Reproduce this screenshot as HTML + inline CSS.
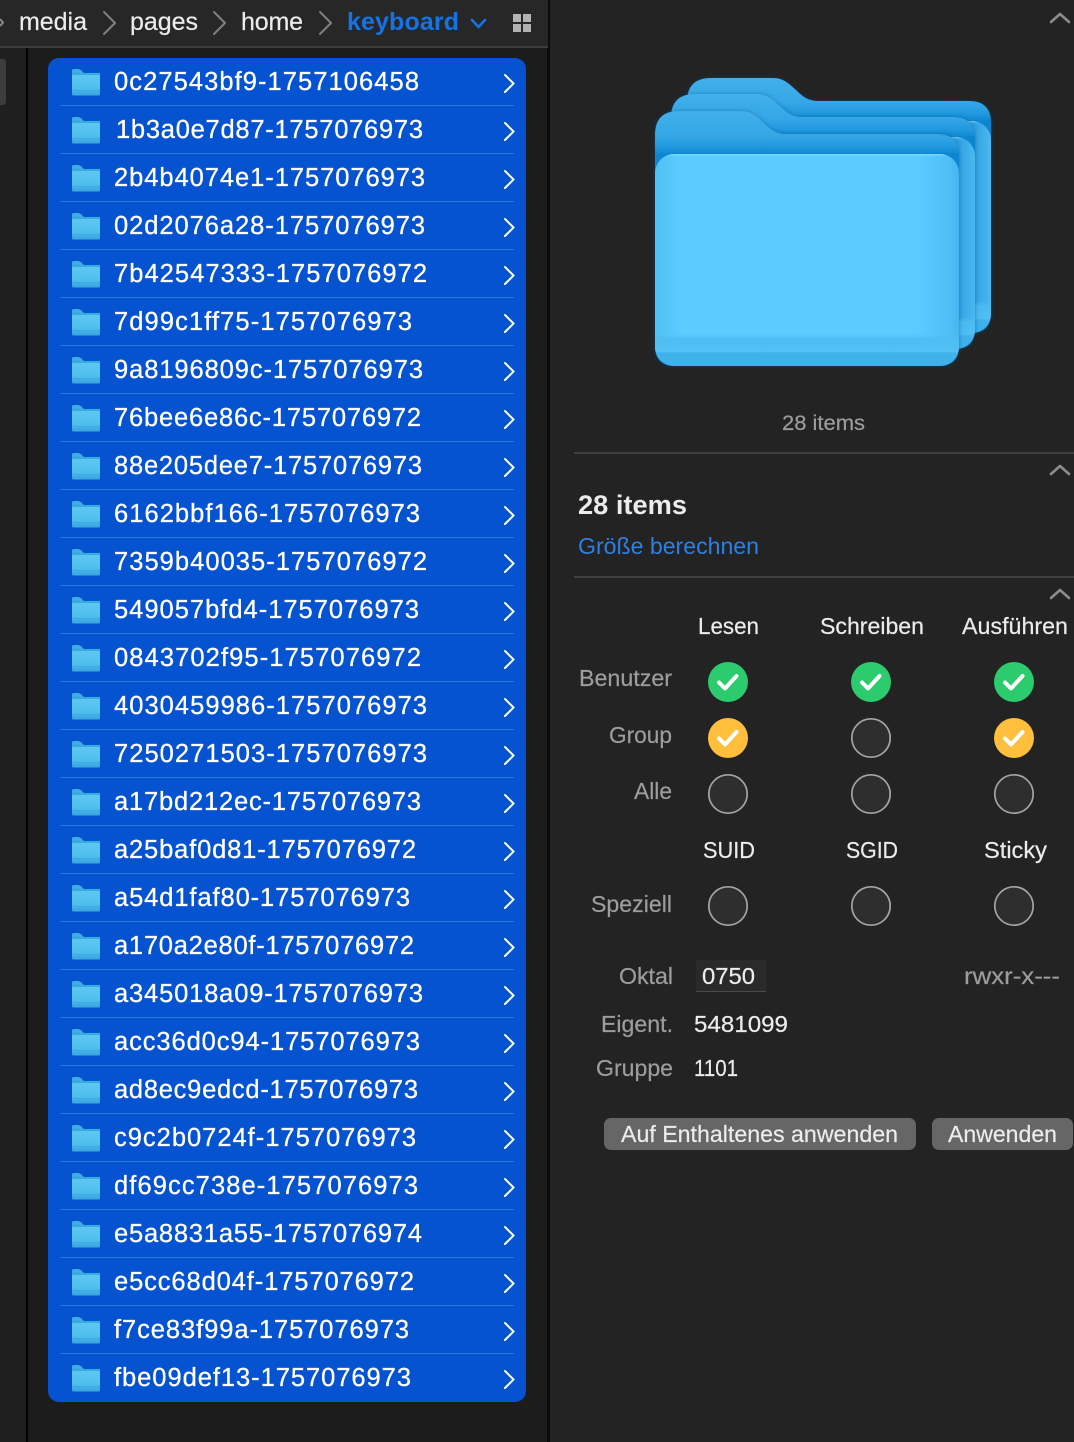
<!DOCTYPE html>
<html>
<head>
<meta charset="utf-8">
<style>
html,body{margin:0;padding:0;background:#232323;width:1074px;height:1442px;overflow:hidden}
svg{display:block}
text{font-family:"Liberation Sans",sans-serif;font-size:25px}
.f{fill:#fff;font-size:25.5px;stroke:#fff;stroke-width:.3px}
.g{fill:#9d9d9d;font-size:23.5px;stroke:#9d9d9d;stroke-width:.2px}
.w{fill:#ececec;font-size:23.5px;stroke:#ececec;stroke-width:.2px}
</style>
</head>
<body>
<svg width="1074" height="1442" viewBox="0 0 1074 1442" xmlns="http://www.w3.org/2000/svg">
<defs>
<linearGradient id="back" x1="0" y1="0" x2="0" y2="1"><stop offset="0" stop-color="#41afea"/><stop offset=".09" stop-color="#36a8e7"/><stop offset=".14" stop-color="#2299df"/><stop offset=".17" stop-color="#0c86cf"/><stop offset="1" stop-color="#0c86cf"/></linearGradient>
<linearGradient id="edgeH" x1="0" y1="0" x2="1" y2="0"><stop offset="0" stop-color="#4fc0f5"/><stop offset=".08" stop-color="#5ccbff"/><stop offset=".86" stop-color="#5ccbff"/><stop offset=".97" stop-color="#4fbff5"/><stop offset="1" stop-color="#45b6ee"/></linearGradient>
<linearGradient id="strip" x1="0" y1="0" x2="1" y2="0"><stop offset=".94" stop-color="#2f9fe0"/><stop offset="1" stop-color="#4ab9f0"/></linearGradient>
<linearGradient id="band" x1="0" y1="0" x2="0" y2="1"><stop offset="0" stop-color="#7fd8ff"/><stop offset=".012" stop-color="#7fd8ff" stop-opacity="0"/><stop offset=".85" stop-color="#4fbdf2" stop-opacity="0"/><stop offset=".873" stop-color="#4fbdf2"/><stop offset=".934" stop-color="#52c1f5"/><stop offset=".937" stop-color="#42b3ec"/><stop offset="1" stop-color="#3eafe9"/></linearGradient>
<linearGradient id="smallBody" x1="0" y1="0" x2="0" y2="1"><stop offset="0" stop-color="#5cc8f3"/><stop offset=".7" stop-color="#4fbeec"/><stop offset=".72" stop-color="#43b2e6"/><stop offset="1" stop-color="#3aa6de"/></linearGradient>
<linearGradient id="smallBack" x1="0" y1="0" x2="0" y2="1"><stop offset="0" stop-color="#3eb0e2"/><stop offset="1" stop-color="#2a94d2"/></linearGradient>
<filter id="sh" x="-10%" y="-10%" width="120%" height="120%"><feDropShadow dx="0" dy="0" stdDeviation="2" flood-color="#06507f" flood-opacity=".5"/></filter>
<path id="bpath" d="M655 346V135Q655 111 679 111H741C752 111 757 117 764 123C770 129 776 134 786 134H937Q959 134 959 156V346Q959 366 939 366H675Q655 366 655 346Z" fill="url(#back)"/>
<g id="bigf" filter="url(#sh)">
<use href="#bpath"/>
<rect x="655" y="154" width="304" height="212" rx="19" fill="url(#edgeH)"/>
<rect x="655" y="154" width="304" height="212" rx="19" fill="url(#band)"/>
</g>
<g id="bigb" filter="url(#sh)">
<use href="#bpath"/>
<rect x="655" y="154" width="304" height="212" rx="19" fill="url(#strip)"/>
<rect x="655" y="154" width="304" height="212" rx="19" fill="url(#band)" opacity=".8"/>
</g>
<g id="sf">
<path d="M72 94V71Q72 69 74 69H78Q80 69 82 71Q83 73 85 73H100V93Q100 95 98 95H74Q72 95 72 94Z" fill="url(#smallBack)"/>
<rect x="72" y="75" width="28" height="20.500" rx="1.200" fill="url(#smallBody)"/>
</g>
<path id="rc" d="M505 75L513.500 83.500L505 92" fill="none" stroke="#fff" stroke-width="2" stroke-linecap="round" stroke-linejoin="round"/>
<g id="row"><use href="#sf"/><use href="#rc"/></g>
<path id="upc" d="M1051 22L1060 14L1069 22" fill="none" stroke="#8c8c8c" stroke-width="2.600" stroke-linecap="round" stroke-linejoin="round"/>
<path id="bc" d="M104 12L115 23L104 34" fill="none" stroke="#808080" stroke-width="2" stroke-linecap="round" stroke-linejoin="round"/>
<path id="ck" d="M-9 0.500L-3 6.500L8.500 -6" fill="none" stroke="#fff" stroke-width="4" stroke-linecap="round" stroke-linejoin="round"/>
<circle id="empty" r="19.200" fill="#2e2e2e" stroke="#a5a5a5" stroke-width="1.700"/>
</defs>

<rect width="1074" height="1442" fill="#232323"/>
<rect x="0" y="0" width="26" height="1442" fill="#1f1f1f"/>
<rect x="26" y="0" width="2" height="1442" fill="#000"/>
<rect x="28" y="0" width="519" height="1442" fill="#1c1c1c"/>
<rect x="547" y="0" width="3" height="1442" fill="#0b0b0b"/>
<path d="M0 59H2Q6 59 6 63V101Q6 105 2 105H0Z" fill="#3d3d3d"/>

<!-- toolbar -->
<rect x="0" y="0" width="548" height="46" fill="#272727"/>
<rect x="0" y="46" width="548" height="2" fill="#3c3c3c"/>
<path d="M0 19L3 22.500L0 26" fill="none" stroke="#8a8a8a" stroke-width="2"/>
<text class="w" x="19" y="30" textLength="68" style="font-size:25px">media</text>
<use href="#bc"/>
<text class="w" x="130" y="30" textLength="68" style="font-size:25px">pages</text>
<use href="#bc" x="110"/>
<text class="w" x="241" y="30" textLength="62" style="font-size:25px">home</text>
<use href="#bc" x="216"/>
<text x="347" y="30" textLength="112" fill="#1274e6" font-weight="bold" style="font-size:25px">keyboard</text>
<path d="M472 20L478.500 27L485 20" fill="none" stroke="#1274e6" stroke-width="2.600" stroke-linecap="round" stroke-linejoin="round"/>
<rect x="513" y="14" width="8" height="8" fill="#b2b2b2"/><rect x="523" y="14" width="8" height="8" fill="#b2b2b2"/><rect x="513" y="24" width="8" height="8" fill="#b2b2b2"/><rect x="523" y="24" width="8" height="8" fill="#b2b2b2"/>

<!-- list -->
<rect x="48" y="58" width="478" height="1344" rx="11" fill="#0653d2"/>
<g fill="#2e73e2">
<rect x="60" y="105" width="454" height="1"/><rect x="60" y="153" width="454" height="1"/><rect x="60" y="201" width="454" height="1"/><rect x="60" y="249" width="454" height="1"/><rect x="60" y="297" width="454" height="1"/><rect x="60" y="345" width="454" height="1"/><rect x="60" y="393" width="454" height="1"/><rect x="60" y="441" width="454" height="1"/><rect x="60" y="489" width="454" height="1"/><rect x="60" y="537" width="454" height="1"/><rect x="60" y="585" width="454" height="1"/><rect x="60" y="633" width="454" height="1"/><rect x="60" y="681" width="454" height="1"/><rect x="60" y="729" width="454" height="1"/><rect x="60" y="777" width="454" height="1"/><rect x="60" y="825" width="454" height="1"/><rect x="60" y="873" width="454" height="1"/><rect x="60" y="921" width="454" height="1"/><rect x="60" y="969" width="454" height="1"/><rect x="60" y="1017" width="454" height="1"/><rect x="60" y="1065" width="454" height="1"/><rect x="60" y="1113" width="454" height="1"/><rect x="60" y="1161" width="454" height="1"/><rect x="60" y="1209" width="454" height="1"/><rect x="60" y="1257" width="454" height="1"/><rect x="60" y="1305" width="454" height="1"/><rect x="60" y="1353" width="454" height="1"/>
</g>
<use href="#row"/><use href="#row" y="48"/><use href="#row" y="96"/><use href="#row" y="144"/><use href="#row" y="192"/><use href="#row" y="240"/><use href="#row" y="288"/><use href="#row" y="336"/><use href="#row" y="384"/><use href="#row" y="432"/><use href="#row" y="480"/><use href="#row" y="528"/><use href="#row" y="576"/><use href="#row" y="624"/><use href="#row" y="672"/><use href="#row" y="720"/><use href="#row" y="768"/><use href="#row" y="816"/><use href="#row" y="864"/><use href="#row" y="912"/><use href="#row" y="960"/><use href="#row" y="1008"/><use href="#row" y="1056"/><use href="#row" y="1104"/><use href="#row" y="1152"/><use href="#row" y="1200"/><use href="#row" y="1248"/><use href="#row" y="1296"/>

<text class="f" x="114" y="90" textLength="305">0c27543bf9-1757106458</text>
<text class="f" x="116" y="138" textLength="307">1b3a0e7d87-1757076973</text>
<text class="f" x="114" y="186" textLength="311">2b4b4074e1-1757076973</text>
<text class="f" x="114" y="234" textLength="311">02d2076a28-1757076973</text>
<text class="f" x="114" y="282" textLength="313">7b42547333-1757076972</text>
<text class="f" x="114" y="330" textLength="298">7d99c1ff75-1757076973</text>
<text class="f" x="114" y="378" textLength="309">9a8196809c-1757076973</text>
<text class="f" x="114" y="426" textLength="307">76bee6e86c-1757076972</text>
<text class="f" x="114" y="474" textLength="308">88e205dee7-1757076973</text>
<text class="f" x="114" y="522" textLength="306">6162bbf166-1757076973</text>
<text class="f" x="114" y="570" textLength="313">7359b40035-1757076972</text>
<text class="f" x="114" y="618" textLength="305">549057bfd4-1757076973</text>
<text class="f" x="114" y="666" textLength="307">0843702f95-1757076972</text>
<text class="f" x="114" y="714" textLength="313">4030459986-1757076973</text>
<text class="f" x="114" y="762" textLength="313">7250271503-1757076973</text>
<text class="f" x="114" y="810" textLength="307">a17bd212ec-1757076973</text>
<text class="f" x="114" y="858" textLength="302">a25baf0d81-1757076972</text>
<text class="f" x="114" y="906" textLength="296">a54d1faf80-1757076973</text>
<text class="f" x="114" y="954" textLength="300">a170a2e80f-1757076972</text>
<text class="f" x="114" y="1002" textLength="309">a345018a09-1757076973</text>
<text class="f" x="114" y="1050" textLength="306">acc36d0c94-1757076973</text>
<text class="f" x="114" y="1098" textLength="304">ad8ec9edcd-1757076973</text>
<text class="f" x="114" y="1146" textLength="302">c9c2b0724f-1757076973</text>
<text class="f" x="114" y="1194" textLength="304">df69cc738e-1757076973</text>
<text class="f" x="114" y="1242" textLength="308">e5a8831a55-1757076974</text>
<text class="f" x="114" y="1290" textLength="300">e5cc68d04f-1757076972</text>
<text class="f" x="114" y="1338" textLength="295">f7ce83f99a-1757076973</text>
<text class="f" x="114" y="1386" textLength="297">fbe09def13-1757076973</text>

<!-- preview folder -->
<use href="#bigb" x="32" y="-33"/>
<use href="#bigb" x="16" y="-17"/>
<use href="#bigf"/>

<!-- right pane -->
<use href="#upc"/>
<use href="#upc" y="452"/>
<use href="#upc" y="576"/>
<text class="g" x="782" y="430" textLength="83" lengthAdjust="spacingAndGlyphs" style="font-size:21px">28 items</text>
<rect x="574" y="452" width="500" height="2" fill="#3f3f3f"/>
<text x="578" y="514" textLength="109" lengthAdjust="spacingAndGlyphs" fill="#ececec" font-weight="bold" style="font-size:27px">28 items</text>
<text x="578" y="554" textLength="181" lengthAdjust="spacingAndGlyphs" fill="#2b80e6" style="font-size:23.500px">Größe berechnen</text>
<rect x="574" y="576" width="500" height="2" fill="#3f3f3f"/>

<text class="w" x="698" y="634" textLength="61" lengthAdjust="spacingAndGlyphs">Lesen</text>
<text class="w" x="820" y="634" textLength="104" lengthAdjust="spacingAndGlyphs">Schreiben</text>
<text class="w" x="962" y="634" textLength="106" lengthAdjust="spacingAndGlyphs">Ausführen</text>

<text class="g" x="579" y="686" textLength="93" lengthAdjust="spacingAndGlyphs">Benutzer</text>
<text class="g" x="609" y="743" textLength="63" lengthAdjust="spacingAndGlyphs">Group</text>
<text class="g" x="634" y="799" textLength="38" lengthAdjust="spacingAndGlyphs">Alle</text>

<circle cx="728" cy="682" r="20" fill="#2ccb6e"/><use href="#ck" x="728" y="682"/>
<circle cx="871" cy="682" r="20" fill="#2ccb6e"/><use href="#ck" x="871" y="682"/>
<circle cx="1014" cy="682" r="20" fill="#2ccb6e"/><use href="#ck" x="1014" y="682"/>
<circle cx="728" cy="738" r="20" fill="#ffbf3d"/><use href="#ck" x="728" y="738"/>
<use href="#empty" x="871" y="738"/>
<circle cx="1014" cy="738" r="20" fill="#ffbf3d"/><use href="#ck" x="1014" y="738"/>
<use href="#empty" x="728" y="794"/>
<use href="#empty" x="871" y="794"/>
<use href="#empty" x="1014" y="794"/>

<text class="w" x="703" y="858" textLength="52" lengthAdjust="spacingAndGlyphs">SUID</text>
<text class="w" x="846" y="858" textLength="52" lengthAdjust="spacingAndGlyphs">SGID</text>
<text class="w" x="984" y="858" textLength="63" lengthAdjust="spacingAndGlyphs">Sticky</text>

<text class="g" x="591" y="912" textLength="81" lengthAdjust="spacingAndGlyphs">Speziell</text>
<use href="#empty" x="728" y="906"/>
<use href="#empty" x="871" y="906"/>
<use href="#empty" x="1014" y="906"/>

<text class="g" x="619" y="984" textLength="54" lengthAdjust="spacingAndGlyphs">Oktal</text>
<rect x="696" y="960" width="70" height="32" fill="#2a2a2a"/>
<rect x="696" y="991" width="70" height="1" fill="#4a4a4a"/>
<text class="w" x="702" y="984" textLength="53" lengthAdjust="spacingAndGlyphs">0750</text>
<text class="g" x="964" y="984" textLength="96" lengthAdjust="spacingAndGlyphs">rwxr-x---</text>

<text class="g" x="601" y="1032" textLength="72" lengthAdjust="spacingAndGlyphs">Eigent.</text>
<text class="w" x="694" y="1032" textLength="94" lengthAdjust="spacingAndGlyphs">5481099</text>
<text class="g" x="596" y="1076" textLength="77" lengthAdjust="spacingAndGlyphs">Gruppe</text>
<text class="w" x="694" y="1076" textLength="44" lengthAdjust="spacingAndGlyphs">1101</text>

<rect x="604" y="1118" width="312" height="32" rx="7" fill="#666"/>
<text class="w" x="621" y="1142" textLength="277" lengthAdjust="spacingAndGlyphs">Auf Enthaltenes anwenden</text>
<rect x="932" y="1118" width="141" height="32" rx="7" fill="#666"/>
<text class="w" x="948" y="1142" textLength="109" lengthAdjust="spacingAndGlyphs">Anwenden</text>
</svg>
</body>
</html>
